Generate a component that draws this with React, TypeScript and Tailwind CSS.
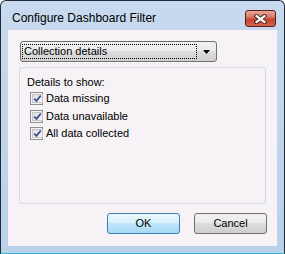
const options = ["Data missing", "Data unavailable", "All data collected"];

function CheckBox() {
  return (
    <span className="w-[13px] h-[13px] shrink-0 border border-[#8e8f8f] bg-[#f4f4f4] p-[1px] flex">
      <span className="flex-1 border border-[#c4c4c4] bg-gradient-to-br from-[#dedede] to-[#f7f7f7] flex items-center justify-center">
        <svg width="9" height="9" viewBox="0 0 9 9">
          <path d="M1.2 4.6 L3.4 6.9 L7.8 1.6" fill="none" stroke="#3a4f8f" strokeWidth="1.7" />
        </svg>
      </span>
    </span>
  );
}

function WinButton({ label, primary }: { label: string; primary?: boolean }) {
  return (
    <button
      className={
        primary
          ? "w-[73px] h-[21px] rounded-[3px] border border-[#3c7fb1] bg-[linear-gradient(#eaf6fd_0%,#d9f0fc_45%,#bee6fd_50%,#a7d9f5_100%)] text-[11px] text-black"
          : "w-[73px] h-[21px] rounded-[3px] border border-[#707070] bg-[linear-gradient(#f2f2f2_0%,#ebebeb_45%,#dddddd_50%,#cfcfcf_100%)] text-[11px] text-black"
      }
    >
      {label}
    </button>
  );
}

export default function App() {
  return (
    <div className="w-[285px] h-[254px] font-['Liberation_Sans',Arial,sans-serif] text-[11px] text-black">
      <div className="w-full h-full flex flex-col rounded-t-[6px] border border-[#1f2a36] border-b-[#3bb4d6] bg-gradient-to-b from-[#c8daef] to-[#b9d1ea] overflow-hidden">
        <div className="h-[29px] shrink-0 flex items-start">
          <span className="ml-[11px] mt-[10px] text-[12px] leading-[14px] text-black">Configure Dashboard Filter</span>
          <span className="ml-auto mr-[8px] mt-[9px] w-[31px] h-[17px] rounded-[3px] border border-[#5b1e17] bg-[linear-gradient(#e9a999_0%,#d77a68_40%,#c5442e_55%,#d0634c_100%)] flex items-center justify-center">
            <svg width="13" height="10" viewBox="0 0 13 10">
              <path d="M2.5 2 L10.5 8 M10.5 2 L2.5 8" stroke="#3d1a14" strokeWidth="4" strokeLinecap="square" />
              <path d="M2.5 2 L10.5 8 M10.5 2 L2.5 8" stroke="#ffffff" strokeWidth="2.2" strokeLinecap="square" />
            </svg>
          </span>
        </div>
        <div className="flex-1 mx-[7px] mb-[7px] bg-[#f6f2f6] flex flex-col pl-[11px] pr-[11px] pt-[11px]">
          <div className="ml-[1px] w-[197px] h-[21px] rounded-[3px] border border-[#707070] bg-[linear-gradient(#f2f2f2_0%,#ebebeb_45%,#dddddd_50%,#cfcfcf_100%)] flex items-center pl-[1px] pr-[6px]">
            <span className="w-[175px] h-[15px] border border-dotted border-black flex items-center pl-[1px] leading-[13px]">
              Collection details
            </span>
            <svg className="ml-auto" width="7" height="4" viewBox="0 0 7 4">
              <path d="M0 0 H7 L3.5 4 Z" fill="#000" />
            </svg>
          </div>
          <div className="mt-[5px] h-[137px] rounded-[3px] border border-[#d5dfe5] border-r-[#c9d6e0] flex flex-col pl-[7px] pt-[8px]">
            <div className="leading-[13px]">Details to show:</div>
            <div className="mt-[1px] ml-[3px] flex flex-col">
              {options.map((o) => (
                <div key={o} className="h-[17.5px] flex items-center gap-[3px]">
                  <CheckBox />
                  <span className="leading-[13px]">{o}</span>
                </div>
              ))}
            </div>
          </div>
          <div className="mt-[9px] flex justify-end gap-[14px] pr-[-1px] mr-[-1px]">
            <WinButton label="OK" primary />
            <WinButton label="Cancel" />
          </div>
        </div>
      </div>
    </div>
  );
}
